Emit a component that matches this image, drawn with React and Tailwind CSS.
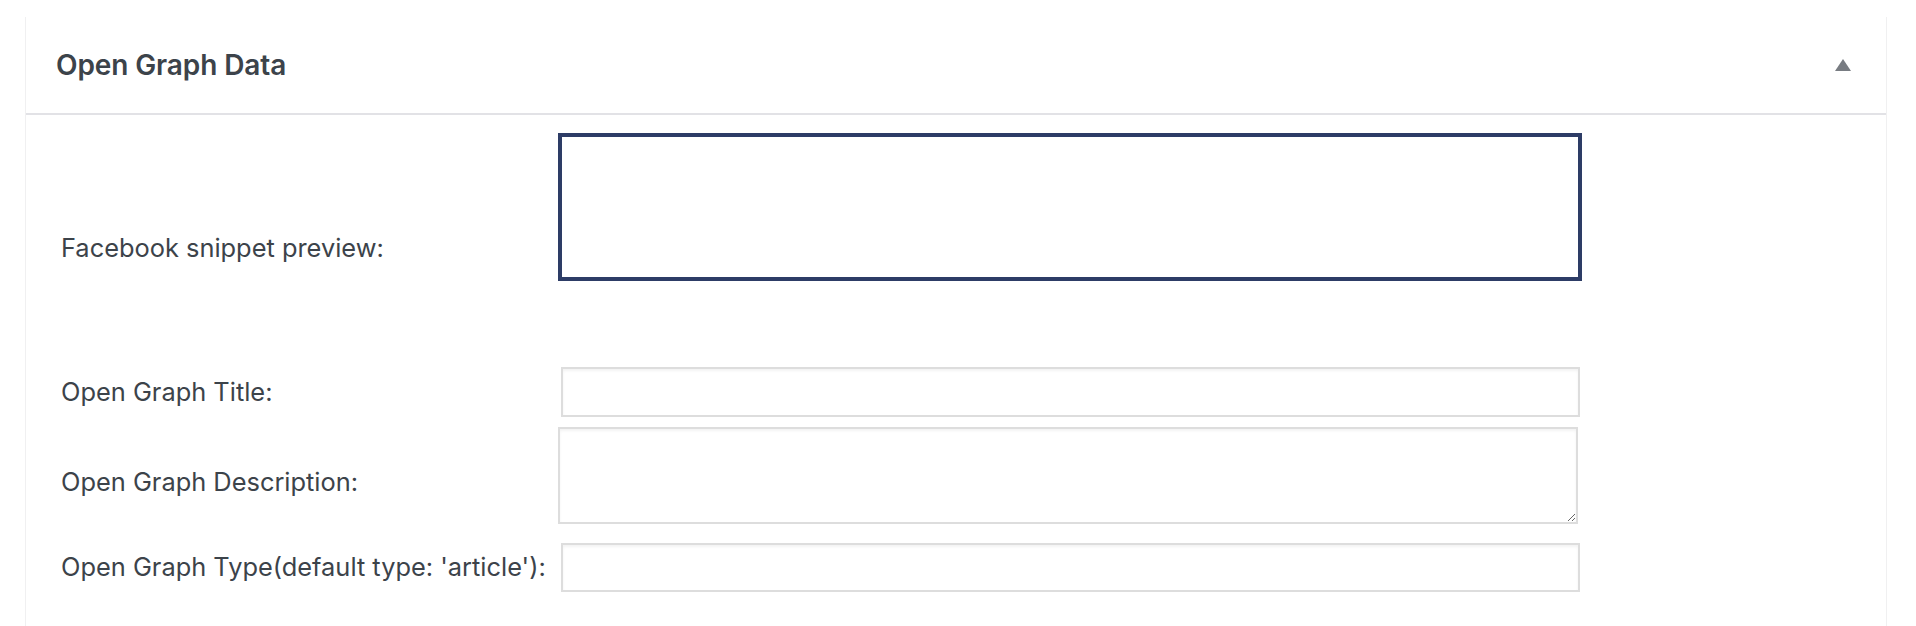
export default function App() {
  const font = { fontFamily: "Inter, 'Liberation Sans', sans-serif" };
  return (
    <div className="min-h-screen bg-white pt-[17px] pl-[25px] pr-[29px]" style={font}>
      <div className="border border-t-0 border-[#f0f0f1] bg-white min-h-[640px]">
        <div className="h-[98px] flex items-center justify-between pl-[31px] pr-[35px] border-b-2 border-[#e2e2e6]">
          <h2 className="text-[28px] font-semibold text-[#3c434a] leading-none tracking-[-0.1px] -ml-[1px]">Open Graph Data</h2>
          <svg width="16" height="12" viewBox="0 0 16 12">
            <polygon points="8,0 16,12 0,12" fill="#787c82" />
          </svg>
        </div>
        <div className="pl-[35px] text-[25.4px] text-[#3c434a]">
          <div className="flex items-center mt-[18px]">
            <div className="w-[497px]">Facebook snippet preview:</div>
            <div className="flex flex-col">
              <div className="h-[148px] w-[1024px] border-4 border-[#2d3c66] bg-white"></div>
              <div className="h-[82px]"></div>
            </div>
          </div>
          <div className="flex items-center mt-[4px]">
            <label className="w-[497px]">Open Graph Title:</label>
            <input type="text" className="ml-[3px] h-[50px] w-[1019px] border-2 border-[#dddddd] bg-white shadow-[inset_0_2px_3px_rgba(0,0,0,0.05)] outline-none" />
          </div>
          <div className="flex items-center mt-[10px]">
            <label className="w-[497px] mt-[13px]">Open Graph Description:</label>
            <textarea className="block h-[97px] w-[1020px] border-2 border-[#dddddd] bg-white shadow-[inset_0_2px_3px_rgba(0,0,0,0.05)] outline-none" />
          </div>
          <div className="flex items-center mt-[19px]">
            <label className="w-[497px] whitespace-nowrap">Open Graph Type(default type: 'article'):</label>
            <input type="text" className="ml-[3px] h-[49px] w-[1019px] border-2 border-[#dddddd] bg-white shadow-[inset_0_2px_3px_rgba(0,0,0,0.05)] outline-none" />
          </div>
        </div>
      </div>
    </div>
  );
}
